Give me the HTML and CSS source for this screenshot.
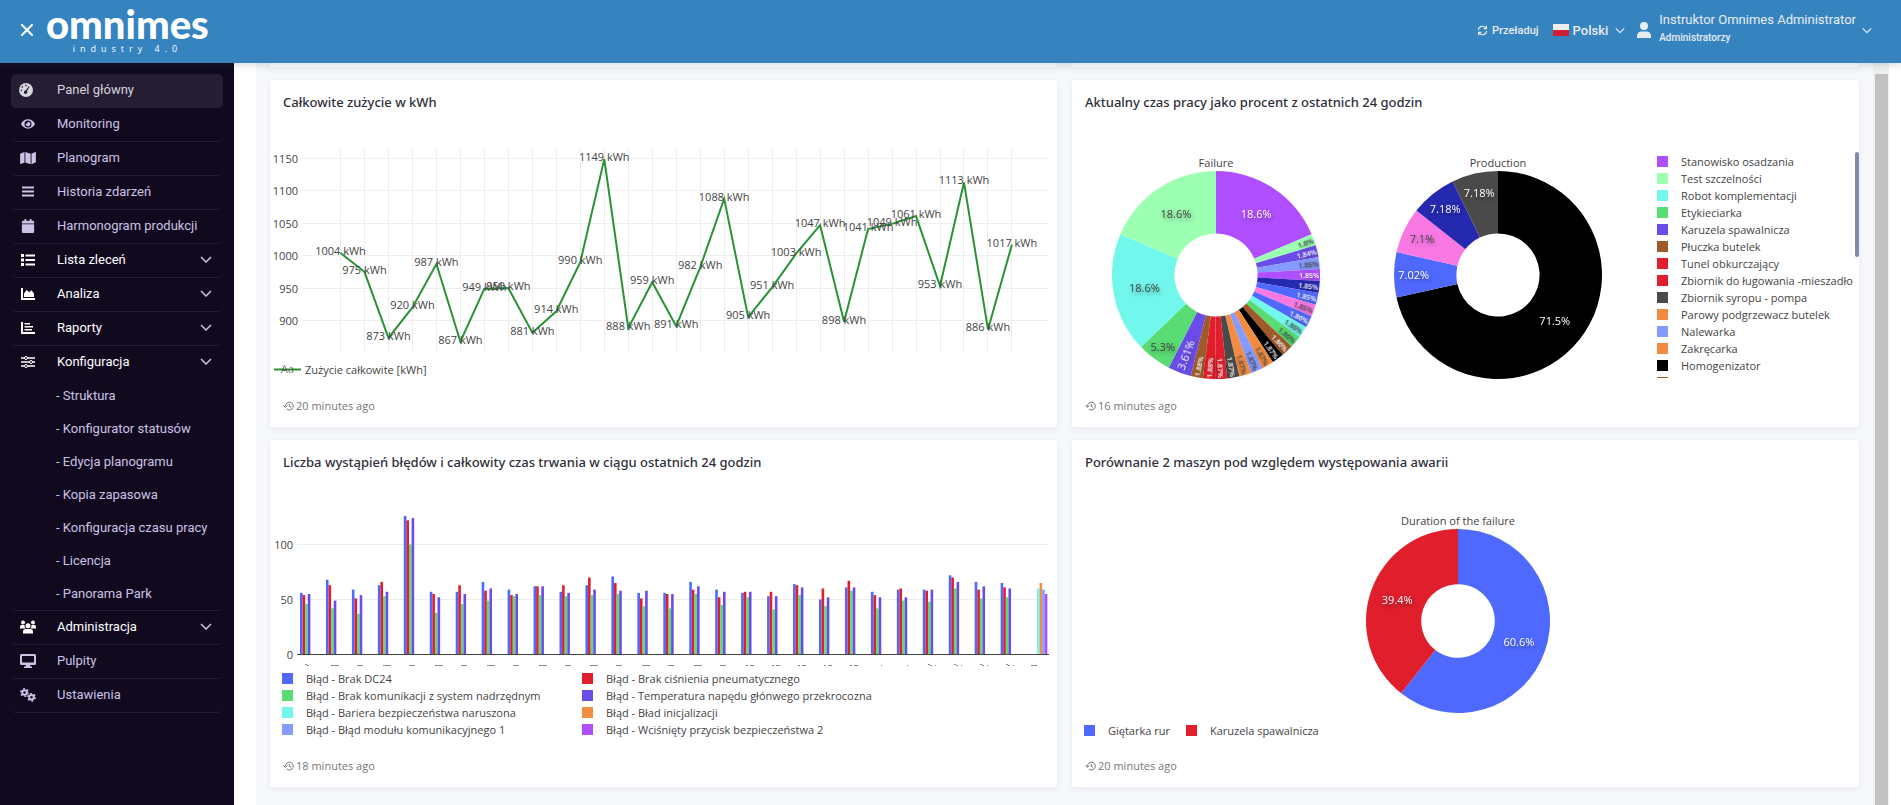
FILE: index.html
```html
<!DOCTYPE html>
<html lang="pl">
<head>
<meta charset="utf-8">
<title>Omnimes – Panel główny</title>
<link rel="stylesheet" href="styles.css">
</head>
<body>
<svg class="defs" aria-hidden="true">
  <symbol id="i-gauge" viewBox="0 0 14 14"><path fill-rule="evenodd" d="M7 0a7 7 0 1 1 0 14A7 7 0 0 1 7 0zM9.9 2.9 6.7 7.6a1.7 1.7 0 1 0 1.3.7L10.6 3.3zM7 1.6a.8.8 0 1 0 0 1.600a.8.8 0 0 0 0-1.600zM3.300 3.100a.8.8 0 1 0 0 1.600a.8.8 0 0 0 0-1.600zM2.300 6.500a.8.8 0 1 0 0 1.600a.8.8 0 0 0 0-1.600z"/></symbol>
  <symbol id="i-eye" viewBox="0 0 576 512"><path d="M572.520 241.400C518.290 135.590 410.930 64 288 64S57.680 135.640 3.480 241.410a32.350 32.350 0 0 0 0 29.190C57.710 376.410 165.070 448 288 448s230.320-71.640 284.520-177.410a32.350 32.350 0 0 0 0-29.190zM288 400a144 144 0 1 1 144-144 143.930 143.930 0 0 1-144 144zm0-240a95.310 95.310 0 0 0-25.310 3.790 47.850 47.850 0 0 1-66.900 66.900A95.780 95.780 0 1 0 288 160z"/></symbol>
  <symbol id="i-map" viewBox="0 0 576 512"><path d="M0 117.660v346.320c0 11.320 11.430 19.060 21.940 14.860L160 416V32L20.120 87.950A32 32 0 0 0 0 117.660zM192 416l192 64V96L192 32v384zM554.060 33.160L416 96v384l139.880-55.950A32 32 0 0 0 576 394.340V48.020c0-11.320-11.430-19.060-21.940-14.860z"/></symbol>
  <symbol id="i-bars" viewBox="0 0 12 12"><path d="M0 1h12v2H0zM0 5h12v2H0zM0 9h12v2H0z"/></symbol>
  <symbol id="i-calendar" viewBox="0 0 448 512"><path d="M12 192h424c6.600 0 12 5.400 12 12v260c0 26.500-21.500 48-48 48H48c-26.500 0-48-21.500-48-48V204c0-6.600 5.400-12 12-12zm436-44v-36c0-26.500-21.500-48-48-48h-48V12c0-6.600-5.400-12-12-12h-40c-6.600 0-12 5.400-12 12v52H160V12c0-6.600-5.400-12-12-12h-40c-6.600 0-12 5.400-12 12v52H48C21.500 64 0 85.500 0 112v36c0 6.600 5.400 12 12 12h424c6.600 0 12-5.400 12-12z"/></symbol>
  <symbol id="i-list" viewBox="0 0 14 12"><path d="M0 0h3v3H0zM0 4.500h3v3H0zM0 9h3v3H0zM4.500 .5H14v2H4.500zM4.500 5H14v2H4.500zM4.500 9.500H14v2H4.500z"/></symbol>
  <symbol id="i-area" viewBox="0 0 14 12"><path d="M0 0h2v10h12v2H0zM3 9V5.500L5.700 2 8.200 4.200 10.500 2.200 13 5.500V9z"/></symbol>
  <symbol id="i-report" viewBox="0 0 14 12"><path d="M0 0h2v10h12v2H0zM3.500 1H9v1.600H3.500zM3.500 4h8.500v1.600H3.500zM3.500 7H11v1.600H3.500z"/></symbol>
  <symbol id="i-sliders" viewBox="0 0 14 12"><path d="M0 1.200h14v1.600H0zM0 5.200h14v1.600H0zM0 9.200h14v1.600H0z"/><g class="knob"><circle cx="5" cy="2" r="1.500"/><circle cx="10" cy="6" r="1.500"/><circle cx="5" cy="10" r="1.500"/></g></symbol>
  <symbol id="i-users" viewBox="0 0 16 13"><circle cx="3" cy="2" r="2"/><circle cx="13" cy="2" r="2"/><circle cx="8" cy="5.200" r="2.500"/><path d="M0 8V6.300C0 5.300.8 4.600 1.700 4.600H4.500C4.500 6 4.800 7.200 5.600 8zM16 8V6.300C16 5.300 15.200 4.600 14.300 4.600H11.500C11.500 6 11.200 7.200 10.400 8zM3 13v-1.700C3 9.700 4.200 8.600 5.700 8.600H10.300C11.800 8.600 13 9.700 13 11.300V13z"/></symbol>
  <symbol id="i-desktop" viewBox="0 0 16 14"><path fill-rule="evenodd" d="M1.500 0h13A1.500 1.500 0 0 1 16 1.500v8A1.500 1.500 0 0 1 14.500 11H10l.5 1.500H12V14H4v-1.500h1.500L6 11H1.500A1.500 1.500 0 0 1 0 9.500v-8A1.500 1.500 0 0 1 1.500 0zM2 2v6.500h12V2z"/></symbol>
  <symbol id="i-cogs" viewBox="0 0 16 14"><g fill="none" stroke="currentColor"><circle cx="4.500" cy="4.500" r="2.300" stroke-width="2"/><circle cx="4.500" cy="4.500" r="3.700" stroke-width="1.400" stroke-dasharray="1.900 1.974"/><circle cx="11.500" cy="9.300" r="2.300" stroke-width="2"/><circle cx="11.500" cy="9.300" r="3.700" stroke-width="1.400" stroke-dasharray="1.900 1.974"/></g></symbol>
  <symbol id="i-chevron" viewBox="0 0 12 7"><path d="M1 1l5 5 5-5" fill="none" stroke="currentColor" stroke-width="1.500"/></symbol>
  <symbol id="i-close" viewBox="0 0 12 12"><path d="M1 1l10 10M11 1 1 11" fill="none" stroke="currentColor" stroke-width="2" stroke-linecap="round"/></symbol>
  <symbol id="i-sync" viewBox="0 0 12 12"><path d="M1.500 5.500A4.500 4.500 0 0 1 9.800 3.500M10.500 6.500A4.500 4.500 0 0 1 2.200 8.500M10.300 .8V4H7.200M1.700 11.200V8H4.800" fill="none" stroke="currentColor" stroke-width="1.300"/></symbol>
  <symbol id="i-user" viewBox="0 0 14 16"><circle cx="7" cy="4" r="4"/><path d="M0 16v-2C0 11.500 1.900 9.600 4.300 9.600H9.700C12.100 9.600 14 11.500 14 14v2z"/></symbol>
  <symbol id="i-history" viewBox="0 0 11 10"><path d="M2.500 5.500a3.900 3.900 0 1 1 1.300 2.500M.3 4.600l2.200 1.700 2-1.900M6.300 2.800v2.600l1.800.8" fill="none" stroke="currentColor"/></symbol>
</svg>

<header class="topbar">
  <button class="icon-button" type="button" aria-label="Zamknij menu"><svg class="close"><use href="#i-close"/></svg></button>
  <a class="logo" href="#"><span class="logo-name">omnimes</span><span class="logo-sub">industry 4.0</span></a>
  <div class="top-actions">
    <button class="reload" type="button"><svg class="sync"><use href="#i-sync"/></svg>Przeładuj</button>
    <button class="language" type="button" aria-haspopup="listbox"><span class="flag"></span>Polski<svg class="chev"><use href="#i-chevron"/></svg></button>
    <button class="account" type="button" aria-haspopup="menu"><svg class="user"><use href="#i-user"/></svg><span class="who"><span class="who-name">Instruktor Omnimes Administrator</span><span class="who-role">Administratorzy</span></span><svg class="chev"><use href="#i-chevron"/></svg></button>
  </div>
</header>

<div class="shell">
  <nav class="sidebar">
    <ul class="menu">
      <li class="active"><a href="#"><svg class="ico gauge"><use href="#i-gauge"/></svg>Panel główny</a></li>
      <li><a href="#"><svg class="ico"><use href="#i-eye"/></svg>Monitoring</a></li>
      <li><a href="#"><svg class="ico wide"><use href="#i-map"/></svg>Planogram</a></li>
      <li><a href="#"><svg class="ico narrow"><use href="#i-bars"/></svg>Historia zdarzeń</a></li>
      <li><a href="#"><svg class="ico"><use href="#i-calendar"/></svg>Harmonogram produkcji</a></li>
      <li class="group"><a href="#"><svg class="ico"><use href="#i-list"/></svg>Lista zleceń<svg class="chev"><use href="#i-chevron"/></svg></a></li>
      <li class="group"><a href="#"><svg class="ico"><use href="#i-area"/></svg>Analiza<svg class="chev"><use href="#i-chevron"/></svg></a></li>
      <li class="group"><a href="#"><svg class="ico"><use href="#i-report"/></svg>Raporty<svg class="chev"><use href="#i-chevron"/></svg></a></li>
      <li class="group"><a href="#"><svg class="ico"><use href="#i-sliders"/></svg>Konfiguracja<svg class="chev"><use href="#i-chevron"/></svg></a>
        <ul class="submenu">
          <li><a href="#">- Struktura</a></li>
          <li><a href="#">- Konfigurator statusów</a></li>
          <li><a href="#">- Edycja planogramu</a></li>
          <li><a href="#">- Kopia zapasowa</a></li>
          <li><a href="#">- Konfiguracja czasu pracy</a></li>
          <li><a href="#">- Licencja</a></li>
          <li><a href="#">- Panorama Park</a></li>
        </ul>
      </li>
      <li class="group"><a href="#"><svg class="ico wide"><use href="#i-users"/></svg>Administracja<svg class="chev"><use href="#i-chevron"/></svg></a></li>
      <li><a href="#"><svg class="ico wide"><use href="#i-desktop"/></svg>Pulpity</a></li>
      <li><a href="#"><svg class="ico wide"><use href="#i-cogs"/></svg>Ustawienia</a></li>
    </ul>
  </nav>

  <main class="board">
    <div class="grid">
      <div class="card tail"></div>
      <div class="card tail"></div>

      <section class="card">
        <h2>Całkowite zużycie w kWh</h2>
        <div class="body"><svg id="usage" class="chart" viewBox="0 0 787 255"></svg></div>
        <p class="age"><svg><use href="#i-history"/></svg>20 minutes ago</p>
      </section>

      <section class="card">
        <h2>Aktualny czas pracy jako procent z ostatnich 24 godzin</h2>
        <div class="body split">
          <svg id="worktime" class="chart" viewBox="0 0 585 255"></svg>
          <ul class="legend side" id="machines"></ul>
          <span class="legend-scroll"></span>
        </div>
        <p class="age"><svg><use href="#i-history"/></svg>16 minutes ago</p>
      </section>

      <section class="card">
        <h2>Liczba wystąpień błędów i całkowity czas trwania w ciągu ostatnich 24 godzin</h2>
        <div class="body">
          <svg id="errors" class="chart" viewBox="0 0 787 185"></svg>
          <ul class="legend pairs" id="error-types"></ul>
        </div>
        <p class="age"><svg><use href="#i-history"/></svg>18 minutes ago</p>
      </section>

      <section class="card">
        <h2>Porównanie 2 maszyn pod względem występowania awarii</h2>
        <div class="body">
          <svg id="compare" class="chart" viewBox="0 0 787 237"></svg>
          <ul class="legend row" id="pair"></ul>
        </div>
        <p class="age"><svg><use href="#i-history"/></svg>20 minutes ago</p>
      </section>
    </div>
    <div class="scrollbar"><span class="thumb"></span></div>
  </main>
</div>
<script src="charts.js"></script>
</body>
</html>
```

FILE: styles.css
```css
* { box-sizing: border-box; }

body {
  margin: 0;
  height: 100vh;
  display: flex;
  flex-direction: column;
  overflow: hidden;
  background: #fff;
  font-family: Roboto, sans-serif;
  font-size: 13px;
  color: #2f2f3a;
}

ul { list-style: none; margin: 0; padding: 0; }
a { color: inherit; text-decoration: none; }
button { border: 0; padding: 0; background: none; color: inherit; font: inherit; }
svg { fill: currentColor; flex: none; }
.defs { position: absolute; width: 0; height: 0; }
.chev { width: 12px; height: 7px; }

/* top bar */
.topbar {
  flex: none;
  position: relative;
  z-index: 2;
  display: flex;
  align-items: center;
  height: 63px;
  padding: 0 29px 3px 21px;
  background: #3584c0;
  color: #e9edf2;
  box-shadow: 0 2px 8px rgba(40, 60, 90, .18);
}
.icon-button { display: flex; color: #fff; }
.close { width: 12px; height: 12px; }
.logo {
  display: flex;
  flex-direction: column;
  align-items: center;
  margin-left: 13px;
  padding-bottom: 3px;
  color: #fff;
}
.logo-name { font: 900 40px/40px Lato, sans-serif; }
.logo-sub { font: 9px/10px "Open Sans", sans-serif; letter-spacing: 5px; }
.top-actions {
  display: flex;
  align-items: center;
  margin-left: auto;
  font-weight: 500;
}
.reload { display: flex; align-items: center; gap: 4px; font-size: 11px; }
.sync { width: 11px; height: 11px; }
.language { display: flex; align-items: center; margin-left: 14px; gap: 4px; }
.language .chev { width: 10px; margin-left: 3px; }
.flag { width: 16px; height: 12px; background: linear-gradient(#eee 50%, #d21e34 50%); }
.account { display: flex; align-items: center; margin-left: 12px; text-align: left; }
.account .user { width: 14px; height: 16px; margin-right: 8px; }
.account .chev { width: 10px; margin-left: 6px; }
.who { display: flex; flex-direction: column; gap: 2px; padding-bottom: 5px; }
.who-name { font-weight: 400; line-height: 18px; }
.who-role { font-size: 10px; line-height: 14px; }

.shell { flex: 1; display: flex; min-height: 0; }

/* side menu */
.sidebar {
  flex: none;
  width: 234px;
  padding: 11px;
  background: #110a1f;
  color: #cdc2e6;
}
.menu > li { border-bottom: 1px solid #231b32; border-radius: 5px; }
.menu > li > a { display: flex; align-items: center; height: 33px; padding: 0 11px 2px 9px; }
.menu > li.active { background: #241d33; border-color: #241d33; color: #d6d6dc; }
.menu > li.group > a { color: #fff; }
.menu .chev { margin-left: auto; color: #cdc2e6; }
.ico { width: 14px; height: 14px; margin: 0 22px 0 1px; }
.ico.wide { width: 16px; margin: 0 21px 0 0; }
.ico.narrow { width: 12px; height: 13px; margin: 0 23px 0 2px; }
.ico.gauge { margin: 0 24px 0 -1px; }
.knob { fill: #110a1f; stroke: currentColor; }
.submenu a { display: block; padding-left: 45px; line-height: 33px; }

/* dashboard */
.board { flex: 1; display: flex; min-width: 0; padding: 0 12px 0 22px; }
.grid {
  flex: 1;
  min-width: 0;
  display: grid;
  grid-template-columns: 1fr 1fr;
  align-content: start;
  gap: 13px 15px;
  padding: 0 14px;
  background: #f6f8fa;
}
.card {
  position: relative;
  min-width: 0;
  background: #fff;
  border-radius: 3px;
  box-shadow: 0 2px 6px rgba(60, 80, 110, .08);
}
.tail { height: 4px; }
.card h2 {
  margin: 0;
  padding: 12px 13px 13px;
  font: 500 13px/20px "Noto Sans", sans-serif;
  color: #2f2f3a;
}
.card .body { font-family: "Open Sans", sans-serif; font-size: 11px; color: #444; }
.split { display: flex; position: relative; }
.chart { display: block; width: 100%; height: auto; }
.split .chart { flex: 1; min-width: 0; }
.age {
  display: flex;
  align-items: center;
  gap: 2px;
  margin: 0;
  padding: 18px 13px 13px;
  font: 11px/16px "Open Sans", sans-serif;
  color: #777;
}
.age svg { width: 11px; height: 10px; }

.legend li { display: flex; align-items: center; gap: 13px; height: 17px; line-height: 17px; white-space: nowrap; }
.swatch { flex: none; width: 11px; height: 11px; }
.side { width: 202px; height: 225px; margin-top: 28px; overflow: hidden; }
.legend-scroll {
  position: absolute;
  right: 0;
  top: 27px;
  width: 4px;
  height: 105px;
  border-radius: 2px;
  background: #808ba4;
}
.pairs { display: grid; grid-template-columns: 300px 1fr; padding: 0 12px 2px; }
.row { display: flex; gap: 16px; padding: 0 12px 1px; }

.scrollbar { flex: none; width: 16px; padding: 11px 1px 0 2px; background: #f0f0f0; }
.thumb { display: block; height: 100%; background: #c1c1c1; }

/* chart parts */
.gridline { stroke: #eee; }
.axis { stroke: #444; }
.curve { fill: none; stroke: #2a9235; stroke-width: 2; }
.chart text { fill: #444; font-size: 11px; }
.chart .on-slice { filter: drop-shadow(1px 2px 2px rgba(0, 0, 0, .4)); }
.chart .light { fill: #fff; }
.chart .tiny { font-size: 7px; font-weight: 600; }
.tickmark { stroke: #888; fill: none; }
```

FILE: charts.js
```js
const NS = 'http://www.w3.org/2000/svg';
const C = {
  blue: '#4f69ff', red: '#e01e2c', green: '#59dc73', violet: '#6a4de8', cyan: '#72f7ec',
  orange: '#f28c40', sky: '#869bff', purple: '#b04fff', mint: '#9cffb2', navy: '#2529b0',
  pink: '#f978e4', brown: '#a05a2a', black: '#000000', grey: '#4a4a4a'
};

function add(parent, tag, attrs, text) {
  const el = document.createElementNS(NS, tag);
  for (const k in attrs) el.setAttribute(k, attrs[k]);
  if (text) el.textContent = text;
  parent.appendChild(el);
  return el;
}

function legend(id, items) {
  const ul = document.getElementById(id);
  for (const [color, label] of items) {
    const li = document.createElement('li');
    const s = document.createElement('span');
    s.className = 'swatch';
    s.style.background = C[color];
    li.append(s, label);
    ul.append(li);
  }
}

/* energy usage line */
(function () {
  const svg = document.getElementById('usage');
  const data = [1004, 975, 873, 920, 987, 867, 949, 950, 881, 914, 990, 1149, 888, 959, 891,
    982, 1088, 905, 951, 1003, 1047, 898, 1041, 1049, 1061, 953, 1113, 886, 1017];
  const x = i => 70.5 + i * 23.98;
  const y = v => 33.5 + (1150 - v) * 0.6475;
  data.forEach((v, i) => {
    const gx = Math.floor(x(i)) + 0.5;
    add(svg, 'line', { class: 'gridline', x1: gx, x2: gx, y1: 23, y2: 227 });
  });
  for (let v = 900; v <= 1150; v += 50) {
    const gy = Math.floor(y(v)) + 0.5;
    add(svg, 'line', { class: 'gridline', x1: 33, x2: 779, y1: gy, y2: gy });
    add(svg, 'text', { x: 28, y: gy + 4, 'text-anchor': 'end' }, String(v));
  }
  add(svg, 'polyline', { class: 'curve', points: data.map((v, i) => x(i) + ',' + y(v)).join(' ') });
  data.forEach((v, i) => add(svg, 'text', { x: x(i), y: y(v) + 2, 'text-anchor': 'middle' }, v + ' kWh'));
  add(svg, 'line', { class: 'curve', x1: 4, x2: 31, y1: 244.5, y2: 244.5 });
  add(svg, 'text', { x: 17.5, y: 248, 'text-anchor': 'middle', opacity: 0.7 }, 'Aa');
  add(svg, 'text', { x: 35, y: 249 }, 'Zużycie całkowite [kWh]');
})();

/* doughnuts: slices run clockwise from the top */
function doughnut(svg, cx, cy, r, title, slices) {
  const inner = r * 0.4;
  const total = slices.reduce((s, d) => s + d[0], 0);
  const at = (a, d) => [cx + d * Math.sin(a), cy - d * Math.cos(a)];
  let a0 = 0;
  const labels = [];
  for (const [value, color, dark] of slices) {
    const a1 = a0 + value / total * 2 * Math.PI;
    const big = a1 - a0 > Math.PI ? 1 : 0;
    add(svg, 'path', {
      fill: C[color],
      d: `M${at(a0, r)}A${r} ${r} 0 ${big} 1 ${at(a1, r)}L${at(a1, inner)}A${inner} ${inner} 0 ${big} 0 ${at(a0, inner)}Z`
    });
    labels.push([value, (a0 + a1) / 2, dark]);
    a0 = a1;
  }
  for (const [value, a, dark] of labels) {
    const deg = a * 180 / Math.PI;
    const cls = 'on-slice' + (dark ? '' : ' light');
    const label = value + '%';
    if (value > 5) {
      const [x, y] = at(a, value > 10 ? (r + inner) / 2 : value > 6 ? r * 0.81 : r * 0.86);
      add(svg, 'text', { class: cls, x, y: y + 4, 'text-anchor': 'middle' }, label);
    } else {
      const left = deg > 180;
      const small = value < 2;
      const [x, y] = at(a, small ? r - 1 : r - 3);
      add(svg, 'text', {
        class: cls + (small ? ' tiny' : ''),
        'text-anchor': left ? 'start' : 'end',
        transform: `translate(${x} ${y}) rotate(${left ? deg + 90 : deg - 90})`,
        dy: small ? 3 : 4
      }, label);
    }
  }
  add(svg, 'text', { x: cx, y: cy - r - 4, 'text-anchor': 'middle' }, title);
}

const work = document.getElementById('worktime');
doughnut(work, 144, 150, 104, 'Failure', [
  [18.6, 'purple'], [1.8, 'mint', 1], [1.84, 'violet'], [1.85, 'sky', 1], [1.85, 'purple'],
  [1.85, 'navy'], [1.85, 'blue'], [1.85, 'pink', 1], [1.86, 'blue'], [1.86, 'cyan', 1],
  [1.86, 'green', 1], [1.86, 'brown'], [1.87, 'black'], [1.87, 'orange', 1], [1.87, 'sky', 1],
  [1.87, 'orange', 1], [1.87, 'grey'], [1.87, 'red'], [1.88, 'red'], [1.88, 'brown'],
  [3.61, 'violet'], [5.3, 'green', 1], [18.6, 'cyan', 1], [18.6, 'mint', 1]
]);
doughnut(work, 426, 150, 104, 'Production', [
  [71.5, 'black'], [7.02, 'blue'], [7.1, 'pink', 1], [7.18, 'navy'], [7.18, 'grey']
]);
doughnut(document.getElementById('compare'), 386, 136, 92, 'Duration of the failure', [
  [60.6, 'blue'], [39.4, 'red']
]);

legend('machines', [
  ['purple', 'Stanowisko osadzania'], ['mint', 'Test szczelności'], ['cyan', 'Robot komplementacji'],
  ['green', 'Etykieciarka'], ['violet', 'Karuzela spawalnicza'], ['brown', 'Płuczka butelek'],
  ['red', 'Tunel obkurczający'], ['red', 'Zbiornik do ługowania -mieszadło'],
  ['grey', 'Zbiornik syropu - pompa'], ['orange', 'Parowy podgrzewacz butelek'],
  ['sky', 'Nalewarka'], ['orange', 'Zakręcarka'], ['black', 'Homogenizator'], ['brown', '']
]);
legend('pair', [['blue', 'Giętarka rur'], ['red', 'Karuzela spawalnicza']]);
legend('error-types', [
  ['blue', 'Błąd - Brak DC24'], ['red', 'Błąd - Brak ciśnienia pneumatycznego'],
  ['green', 'Błąd - Brak komunikacji z system nadrzędnym'], ['violet', 'Błąd - Temperatura napędu głónwego przekrocozna'],
  ['cyan', 'Błąd - Bariera bezpieczeństwa naruszona'], ['orange', 'Błąd - Bład inicjalizacji'],
  ['sky', 'Błąd - Błąd modułu komunikacyjnego 1'], ['purple', 'Błąd - Wciśnięty przycisk bezpieczeństwa 2']
]);

/* error bars: eight series share each group, four of them filled */
(function () {
  const svg = document.getElementById('errors');
  const zero = 169.5, unit = 1.1, pitch = 25.95, w = pitch / 10;
  for (const v of [0, 50, 100]) {
    const gy = zero - v * unit;
    if (v) add(svg, 'line', { class: 'gridline', x1: 27, x2: 779, y1: gy, y2: gy });
    add(svg, 'text', { x: 23, y: gy + 4, 'text-anchor': 'end' }, String(v));
  }
  const groups = [
    [56, 54, 46, 55], [68, 63, 42, 49], [59, 51, 37, 54], [63, 66, 53, 57], [126, 122, 100, 124],
    [57, 55, 38, 52], [57, 63, 46, 55], [66, 58, 49, 60], [59, 54, 53, 55], [62, 62, 54, 62],
    [57, 63, 53, 56], [63, 70, 54, 59], [71, 65, 55, 58], [56, 51, 44, 58], [56, 55, 42, 55],
    [66, 59, 55, 62], [59, 52, 45, 57], [56, 57, 52, 57], [53, 57, 41, 53], [64, 63, 54, 61],
    [50, 60, 44, 52], [61, 67, 58, 61], [57, 54, 42, 52], [59, 60, 49, 52], [59, 58, 48, 59],
    [72, 70, 60, 66], [66, 59, 51, 62], [65, 61, 52, 60], [60, 65, 59, 55]
  ];
  groups.forEach((values, g) => {
    const last = g === groups.length - 1;
    const colors = last ? ['cyan', 'orange', 'sky', 'purple'] : ['blue', 'red', 'green', 'violet'];
    const x0 = 30 + g * pitch;
    values.forEach((v, i) => add(svg, 'rect', {
      x: x0 + (i + (last ? 4 : 0)) * w, y: zero - v * unit, width: w, height: v * unit, fill: C[colors[i]]
    }));
    const tx = Math.round(x0) + 5;
    let d = `M${tx} 180.500h${g % 2 ? 8 : 6}`;
    if (g === 0) d = `M${tx} 179.500h2m0 1h2`;
    else if (last) d = `M${tx - 1} 180.500h6`;
    else if (g > 23) d = `M${tx} 179.500h2m0 1h2m3 0h1`;
    else if (g > 21) d = `M${tx + 5} 180.500h1`;
    else if (g > 16) d = `M${tx} 180.500h2m2 0h4`;
    add(svg, 'path', { class: 'tickmark', d });
  });
  add(svg, 'line', { class: 'axis', x1: 27, x2: 779, y1: zero, y2: zero });
})();
```
